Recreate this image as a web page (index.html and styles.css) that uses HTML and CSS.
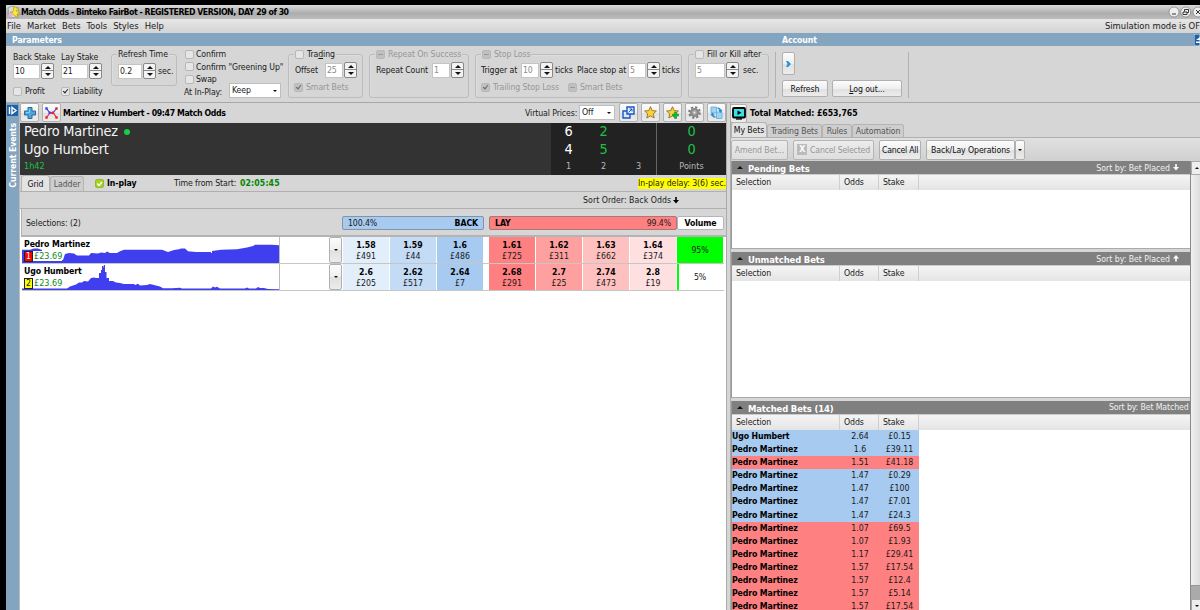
FILE: index.html
```html
<!DOCTYPE html>
<html lang="en">
<head>
<meta charset="utf-8">
<title>Match Odds - Binteko FairBot</title>
<link rel="stylesheet" href="styles.css">
</head>
<body>
<div class="window">
  <div class="titlebar">
    <svg class="logo" width="15" height="14" viewBox="0 0 15 14"><path d="M1 3l4-2 3 2 3-1 1 5-3 5-6 1-1-4z" fill="#d8dde0" stroke="#8b8f8a" stroke-width=".7"/><path d="M7 1l5 4-3 .5 4 4-3-.5 1 4-8-6 3 .2z" fill="#ffe82e" stroke="#a38b12" stroke-width=".6"/><circle cx="3.5" cy="10.5" r="2" fill="#eda6e6"/></svg>
    <b class="window-title">Match Odds - Binteko FairBot - REGISTERED VERSION, DAY 29 of 30</b>
    <div class="window-buttons">
      <svg width="34" height="12" viewBox="0 0 34 12"><g fill="#eee" stroke="#888" stroke-width=".8"><circle cx="6" cy="6" r="5"/><circle cx="17.7" cy="6" r="5"/><circle cx="30" cy="6" r="5"/></g><g fill="none" stroke="#333" stroke-width="1"><path d="M4 8h4M16.5 5.500V3.500h4v3h-1.500M15 6h4v2.500h-4zM28 4l4 4M32 4l-4 4"/></g></svg>
    </div>
  </div>
  <div class="menubar"><span>File</span><span>Market</span><span>Bets</span><span>Tools</span><span>Styles</span><span>Help</span><span class="simulation">Simulation mode is OF</span></div>
  <div class="section-bar"><b class="params-title">Parameters</b><b class="account-title">Account</b>
    <svg class="pin" width="6" height="12" viewBox="0 0 6 12"><path d="M0 0h6v12H0z" fill="#1f5fa6" stroke="#dde6f0"/><path d="M2 6l4-3v3zM2 7.500h4v1.500H2z" fill="#fff"/></svg>
  </div>

  <div class="params">
    <div class="stakes">
      <div class="stake"><span>Back Stake</span><div class="spin"><i class="field">10</i><i class="arrows"></i></div><label class="chk-line"><i class="chk"></i>Profit</label></div>
      <div class="stake"><span>Lay Stake</span><div class="spin"><i class="field">21</i><i class="arrows"></i></div><label class="chk-line"><i class="chk on"></i>Liability</label></div>
    </div>
    <div class="group refresh-time"><div class="legend">Refresh Time</div><div class="row"><div class="spin"><i class="field">0.2</i><i class="arrows"></i></div><span>sec.</span></div></div>
    <div class="confirms">
      <label class="chk-line"><i class="chk"></i>Confirm</label>
      <label class="chk-line"><i class="chk"></i><span>Confirm "Greening Up"</span></label>
      <label class="chk-line"><i class="chk"></i>Swap</label>
      <div class="inplay"><span>At In-Play:</span><div class="select">Keep</div></div>
    </div>
    <div class="group trading"><div class="legend"><i class="chk"></i><span>Tra<u>d</u>ing</span></div><div class="row"><span class="offset">Offset</span><div class="spin off"><i class="field">25</i><i class="arrows"></i></div></div><div class="row checks dim"><i class="chk on"></i>Smart Bets</div></div>
    <div class="group repeat"><div class="legend dim"><i class="chk part"></i>Repeat On Success</div><div class="row"><span class="count">Repeat Count</span><div class="spin off"><i class="field">1</i><i class="arrows"></i></div></div></div>
    <div class="group stop"><div class="legend dim"><i class="chk part"></i>Stop Loss</div>
      <div class="row"><span class="trigger">Trigger at</span><div class="spin off"><i class="field">10</i><i class="arrows"></i></div><span class="ticks">ticks</span><span class="place">Place stop at</span><div class="spin off"><i class="field">5</i><i class="arrows"></i></div><span>ticks</span></div>
      <div class="row checks dim"><i class="chk on"></i><span class="trailing">Trailing Stop Loss</span><i class="chk part"></i>Smart Bets</div></div>
    <div class="group fill"><div class="legend"><i class="chk"></i>Fill or Kill after</div><div class="row"><div class="spin off"><i class="field">5</i><i class="arrows"></i></div><span class="secs">sec.</span></div></div>
    <div class="account">
      <div class="btn expand"><svg width="5" height="6" viewBox="0 0 5 6"><path d="M0 0h2l3 3-3 3H0l1.500-3z" fill="#2692dc"/></svg></div>
      <div class="account-buttons"><div class="btn refresh">Refresh</div><div class="btn logout"><span><u>L</u>og out...</span></div></div>
    </div>
  </div>

  <div class="main">
    <div class="sidebar">
      <svg width="11" height="11" viewBox="0 0 11 11"><path d="M0 0h11v11H0z" fill="#1e62ab"/><path d="M2.500 2v7M5 2.500v6l4-3z" fill="none" stroke="#fff" stroke-width="1.400"/></svg>
      <b class="vertical">Current Events</b>
    </div>

    <div class="market">
      <div class="toolbar">
        <div class="btn tool"><svg width="12" height="12" viewBox="0 0 12 12"><path d="M4 .5h4V4h3.500v4H8v3.500H4V8H.5V4H4z" fill="#4ba6dc" stroke="#2a6c9c"/><path d="M5.500 2v3.500H2" fill="none" stroke="#8bd0f5"/></svg></div>
        <div class="btn tool"><svg width="13" height="12" viewBox="0 0 13 12"><path d="M1.500 1.500L4.500 5.500 7.500 6.500 11.500 1.500" fill="none" stroke="#3a40ee" stroke-width="1.200"/><path d="M1.500 10.500L5 6l3-.5L11.500 10.500" fill="none" stroke="#f2212b" stroke-width="1.200"/><g fill="#3a40ee"><path d="M.3.300h2.400v2.400H.3zM3.500 4.500h2.200v2.200H3.500z"/></g><g fill="#f2212b"><path d="M.3 9.300h2.400v2.400H.3zM10.300 9.300h2.400v2.400h-2.400zM10.300.3h2.400v2.400h-2.400zM7 4.500h2.200v2.200H7z"/></g></svg></div>
        <b class="market-name">Martinez v Humbert - 09:47 Match Odds</b>
        <span class="virtual">Virtual Prices:</span><div class="select off-select">Off</div>
        <div class="tools">
          <div class="btn tool"><svg width="13" height="13" viewBox="0 0 13 13"><path d="M1 5h7v7H1z" fill="#dce9fb" stroke="#1855c4" stroke-width="1.400"/><path d="M5 1h7v7H5z" fill="#eef4fd" stroke="#1855c4" stroke-width="1.400"/><path d="M6.500 6.500L10 3M7.500 3H10v2.500" fill="none" stroke="#1855c4"/></svg></div>
          <div class="btn tool"><svg width="13" height="13" viewBox="0 0 13 13"><path d="M6.500 .7l1.700 3.900 4.200.4-3.100 2.800.9 4.200-3.700-2.200L2.800 12l.9-4.200L.6 5l4.200-.4z" fill="#ffd233" stroke="#8b6f2c" stroke-width=".9"/></svg></div>
          <div class="btn tool"><svg width="13" height="13" viewBox="0 0 13 13"><path d="M6.500 .7l1.700 3.900 4.200.4-3.100 2.800.9 4.200-3.700-2.200L2.800 12l.9-4.200L.6 5l4.200-.4z" fill="#ffd233" stroke="#8b6f2c" stroke-width=".9"/><path d="M8.500 6h2v2h2v2h-2v2.500h-2V10h-2V8h2z" fill="#12bc2c" stroke="#168226" stroke-width=".5"/></svg></div>
          <div class="btn tool"><svg width="13" height="13" viewBox="0 0 13 13"><circle cx="6.500" cy="6.500" r="5.300" fill="none" stroke="#777" stroke-width="2" stroke-dasharray="2.160 2"/><circle cx="6.500" cy="6.500" r="3.400" fill="#ccc" stroke="#888" stroke-width="2.400"/><circle cx="6.500" cy="6.500" r="1.400" fill="#eee" stroke="#777" stroke-width=".6"/></svg></div>
          <div class="btn tool"><svg width="13" height="13" viewBox="0 0 13 13"><g fill="#9fd2f3" stroke="#58ade0" stroke-width=".8"><path d="M1 1h5.500v6H1z"/><path d="M6.500 6H12v6.500H6.500z"/></g><path d="M7.500 2.200c2.300 0 3 .8 3 2.800M9 4l1.500 1.800L12 4M5.500 11c-2.200 0-3-.8-3-2.800M1 9.300l1.500-1.800L4 9.300" fill="none" stroke="#2f8fd0" stroke-width="1.400"/></svg></div>
        </div>
      </div>

      <div class="score">
        <div class="players"><span>Pedro Martinez<i class="serve"></i></span><span>Ugo Humbert</span><small>1h42</small></div>
        <div class="sets">
          <b>6</b><em>2</em><em></em>
          <b>4</b><em>5</em><em></em>
          <small>1</small><small>2</small><small>3</small>
        </div>
        <div class="points"><em>0</em><em>0</em><small>Points</small></div>
      </div>

      <div class="grid-tabs">
        <span class="tab active">Grid</span><span class="tab">Ladder</span>
        <svg class="ok" width="9" height="9" viewBox="0 0 9 9"><rect x=".4" y=".4" width="8.200" height="8.200" rx="2" fill="#a3d41c" stroke="#88a818" stroke-width=".8"/><path d="M2.200 4.500l1.800 2 3-3.500" fill="none" stroke="#fff" stroke-width="1.300"/></svg>
        <b class="in-play">In-play</b><span class="from-start">Time from Start:</span><b class="clock">02:05:45</b>
        <span class="delay">In-play delay: 3(6) sec.</span>
      </div>
      <div class="sort-order"><span>Sort Order: Back Odds</span><svg width="6" height="7" viewBox="0 0 6 7"><path d="M2.200 0h1.600v3H6L3 6.500 0 3h2.200z"/></svg></div>
      <div class="grid-head"><span class="selections">Selections: (2)</span><div class="back-head"><span>100.4%</span><b>BACK</b></div><div class="lay-head"><b>LAY</b><span>99.4%</span></div><b class="volume-head">Volume</b></div>

      <div class="runner">
        <div class="graph">
          <svg width="257" height="27" viewBox="0 0 257 27"><path d="M0 27V12.700H8L12 11.500H16L20 13V23H41L43 17 47 16 52 16.500 55 18.500H67L69 16 76 16.500 79 15.500 83 16 85 14.500 88 16 95 16 98 14.300 102 12.700H140L146 15 152 13 157 12.300 159 11.500H163L166 14.200 174 15H189V16H190V14L199 12.700 215 12.300 225 10.500 231 9 233 7.700H250L257 8.300V27z" fill="#403ff0"/></svg>
          <div class="runner-info"><b>Pedro Martinez</b><span class="profit-line"><i class="num red">1</i><em>£23.69</em></span></div>
        </div>
        <div class="btn drop"></div>
        <div class="cell b3"><b>1.58</b>£491</div><div class="cell b2"><b>1.59</b>£44</div><div class="cell b1"><b>1.6</b>£486</div>
        <div class="cell l1"><b>1.61</b>£725</div><div class="cell l2"><b>1.62</b>£311</div><div class="cell l3"><b>1.63</b>£662</div><div class="cell l4"><b>1.64</b>£374</div>
        <div class="volume full">95%</div>
      </div>
      <div class="runner">
        <div class="graph">
          <svg width="257" height="27" viewBox="0 0 257 27"><path d="M0 27V24.500H45L48 22.500 54 20.500 57 18.500H60L62 17 66 17.500 69 14 72 13.500 74 14H77V9H79V6H80V2H81V4L82 1H83V8H84.500V14H87V17H91L94 18.500 98 19 102 20H112L113 21 116 19.800 118 21.500 125 21 128 20 132 21 138 22.500 141 24.300H150L158 23.800 160 24.500H189L191 22.500 193 23.500 195 22.800 198 24.500H223L225 23.500 227 24.500H234L236 23 238 24H242L246 25 257 25.300V27z" fill="#403ff0"/></svg>
          <div class="runner-info"><b>Ugo Humbert</b><span class="profit-line"><i class="num yellow">2</i><em>£23.69</em></span></div>
        </div>
        <div class="btn drop"></div>
        <div class="cell b3"><b>2.6</b>£205</div><div class="cell b2"><b>2.62</b>£517</div><div class="cell b1"><b>2.64</b>£7</div>
        <div class="cell l1"><b>2.68</b>£291</div><div class="cell l2"><b>2.7</b>£25</div><div class="cell l3"><b>2.74</b>£473</div><div class="cell l4"><b>2.8</b>£19</div>
        <div class="volume small">5%</div>
      </div>
    </div>

    <div class="bets">
      <div class="matched-total"><div class="btn video"><svg width="14" height="13" viewBox="0 0 14 13"><rect x="1" y="1" width="12" height="9.500" rx="1" fill="#39e3e3" stroke="#000" stroke-width="1.800"/><path d="M4 12h6" stroke="#000" stroke-width="1.300"/><path d="M5.500 3.500v4.500l4-2.200z"/></svg></div><b>Total Matched: £653,765</b></div>
      <div class="bet-tabs"><span class="tab active">My Bets</span><span class="tab">Trading Bets</span><span class="tab">Rules</span><span class="tab">Automation</span></div>
      <div class="bet-tools"><div class="btn dim amend">Amend Bet...</div><div class="btn dim cancel-sel"><i class="x-icon">X</i><span>Cancel Selected</span></div><div class="btn cancel-all">Cancel All</div><div class="btn ops">Back/Lay Operations</div><div class="btn more"></div></div>
      <div class="lists">
        <div class="list-column">
          <div class="list pending">
            <div class="list-title"><b>Pending Bets</b><span>Sort by: Bet Placed</span><svg width="6" height="7" viewBox="0 0 6 7"><path d="M2.200 0h1.600v3H6L3 6.500 0 3h2.200z"/></svg></div>
            <div class="columns"><span>Selection</span><span>Odds</span><span>Stake</span></div>
          </div>
          <div class="list unmatched">
            <div class="list-title"><b>Unmatched Bets</b><span>Sort by: Bet Placed</span><svg width="6" height="7" viewBox="0 0 6 7"><path d="M2.200 6.500h1.600v-3H6L3 0 0 3.500h2.200z"/></svg></div>
            <div class="columns"><span>Selection</span><span>Odds</span><span>Stake</span></div>
          </div>
          <div class="list matched">
            <div class="list-title"><b>Matched Bets (14)</b><span>Sort by: Bet Matched</span></div>
            <div class="columns"><span>Selection</span><span>Odds</span><span>Stake</span></div>
            <div class="bet back"><b>Ugo Humbert</b><span>2.64</span><span>£0.15</span></div>
            <div class="bet back"><b>Pedro Martinez</b><span>1.6</span><span>£39.11</span></div>
            <div class="bet lay"><b>Pedro Martinez</b><span>1.51</span><span>£41.18</span></div>
            <div class="bet back"><b>Pedro Martinez</b><span>1.47</span><span>£0.29</span></div>
            <div class="bet back"><b>Pedro Martinez</b><span>1.47</span><span>£100</span></div>
            <div class="bet back"><b>Pedro Martinez</b><span>1.47</span><span>£7.01</span></div>
            <div class="bet back"><b>Pedro Martinez</b><span>1.47</span><span>£24.3</span></div>
            <div class="bet lay"><b>Pedro Martinez</b><span>1.07</span><span>£69.5</span></div>
            <div class="bet lay"><b>Pedro Martinez</b><span>1.07</span><span>£1.93</span></div>
            <div class="bet lay"><b>Pedro Martinez</b><span>1.17</span><span>£29.41</span></div>
            <div class="bet lay"><b>Pedro Martinez</b><span>1.57</span><span>£17.54</span></div>
            <div class="bet lay"><b>Pedro Martinez</b><span>1.57</span><span>£12.4</span></div>
            <div class="bet lay"><b>Pedro Martinez</b><span>1.57</span><span>£5.14</span></div>
            <div class="bet lay"><b>Pedro Martinez</b><span>1.57</span><span>£17.54</span></div>
          </div>
        </div>
        <div class="scrollbar"><div class="scroll-up"></div><div class="thumb"></div><div class="track"></div><div class="scroll-down"></div></div>
      </div>
    </div>
  </div>
</div>
</body>
</html>
```
FILE: styles.css
```css
* { box-sizing: border-box; }
body { margin: 0; background: #000; height: 610px; overflow: hidden; padding: 5px 0 0 6px; font: 8.7px/12px "DejaVu Sans Condensed", "DejaVu Sans", sans-serif; color: #1a1a1a; white-space: nowrap; letter-spacing: -0.1px; }
i, em { font-style: normal; }
b { color: #000; }
svg { flex: none; display: block; }
u { text-underline-offset: 1px; }
.window { width: 1194px; height: 605px; background: #d6d6d6; overflow: hidden; }

.titlebar { height: 14px; display: flex; align-items: center; background: linear-gradient(#dadada, #adadad 60%, #bcbcbc); }
.logo { margin-left: 1px; margin-right: -1px; }
.window-title { line-height: 13px; letter-spacing: -0.45px; }
.window-buttons { margin-left: auto; width: 32px; overflow: hidden; }
.menubar { height: 14px; display: flex; align-items: center; gap: 6px; padding-left: 1px; background: linear-gradient(#e6e6e6, #d4d4d4); font-size: 9.4px; line-height: 14px; letter-spacing: -0.01px; }
.simulation { margin-left: auto; letter-spacing: 0; }
.section-bar { height: 13px; display: flex; align-items: center; background: #84a5c0; }
.section-bar b { color: #fff; }
.params-title { width: 770px; padding-left: 6px; }
.account-title { padding-left: 6px; }
.pin { margin-left: auto; }

.params { height: 57px; display: flex; align-items: flex-start; padding-left: 7px; border-bottom: 1px solid #a8a8a8; }
.stakes { display: flex; width: 98px; padding-top: 5px; }
.stake { width: 48px; }
.stake > span { display: block; height: 12px; }
.spin { display: flex; gap: 1px; height: 16px; align-items: center; flex: none; }
.field { width: 27px; height: 15px; background: #fff; border: 1px solid #c4c4c4; padding-left: 1px; line-height: 12px; }
.off .field { color: #8a8a8a; width: 18px; }
.arrows { position: relative; width: 13px; height: 16px; border: 1px solid #888; border-radius: 2px; background: linear-gradient(#f3f3f3 0 45%, #888 45% 52%, #f3f3f3 52%); }
.arrows::before, .arrows::after { content: ""; position: absolute; left: 2.5px; border: 3px solid transparent; }
.arrows::before { top: -1px; border-bottom-color: #111; }
.arrows::after { bottom: -1px; border-top-color: #111; }
.chk { flex: none; width: 9px; height: 9px; background: #e6e6e6; border: 1px solid #b8b8b8; border-radius: 2px; position: relative; }
.chk.on::after { content: ""; position: absolute; left: 2px; top: 0; width: 2px; height: 4px; border: solid #222; border-width: 0 1.3px 1.3px 0; transform: rotate(40deg); }
.chk.part, .dim .chk { background: #c0c0c0; }
.dim .chk.on::after { border-color: #666; }
.chk.part::after { content: ""; position: absolute; left: 1px; top: 3px; width: 5px; height: 1px; background: #999; }
.chk-line { display: flex; align-items: center; gap: 3px; height: 12px; }
.stake .chk-line { margin-top: 6px; }
.dim { color: #969696; }

.group { position: relative; height: 44px; margin-top: 8px; border: 1px solid #bcbcbc; border-radius: 3px; flex: none; box-shadow: inset 1px 1px #ddd; }
.legend { display: flex; align-items: center; gap: 3px; width: max-content; height: 12px; margin: -7px 0 0 5px; padding: 0 1px; background: #d6d6d6; }
.row { display: flex; align-items: center; height: 16px; margin: 2px 0 0 6px; }
.row.checks { height: 12px; gap: 3px; margin-top: 3px; }
.trading .checks { margin-left: 5px; }
.refresh-time { width: 66px; height: 32px; }
.refresh-time .row { margin-top: 3px; }
.refresh-time .field { width: 24px; }
.refresh-time .row > span { padding-left: 2px; }
.confirms { width: 111px; padding: 2px 0 0 8px; flex: none; }
.confirms .chk-line { height: 12.5px; gap: 2px; }
.inplay { display: flex; align-items: center; height: 12px; }
.inplay > span { width: 45px; margin-left: -1px; }
.select { position: relative; flex: none; width: 52px; height: 15px; background: #fff; border: 1px solid #bdbdbd; padding-left: 2px; line-height: 13px; }
.inplay .select { margin-top: -3px; }
.select::after { content: ""; position: absolute; right: 3px; top: 6px; border: 2.5px solid transparent; border-top-color: #111; border-bottom: 0; }
.trading { width: 75px; }
.offset { width: 30px; }
.repeat { width: 100px; margin-left: 6px; }
.count { width: 56px; }
.stop { width: 207px; margin-left: 6px; }
.stop .row { margin-left: 5px; }
.trigger { width: 40px; }
.ticks { padding-left: 2px; width: 24px; }
.place { width: 51px; }
.stop .spin + span:last-child { padding-left: 2px; }
.stop .checks .trailing { width: 70px; margin-right: 2px; }
.fill { width: 81px; margin-left: 6px; }
.fill .off .field { width: 30px; }
.secs { padding-left: 4px; }
.account { height: 46px; margin: 6px 0 0 6px; padding: 0 6px 0 6px; border: solid #b2b2b2; border-width: 0 1px; }
.btn { flex: none; display: flex; align-items: center; justify-content: center; border: 1px solid #b0b0b0; border-radius: 2px; background: linear-gradient(#fcfcfc, #efefef 50%, #e0e0e0 52%, #ececec); color: #111; }
.btn.dim { color: #969696; border-color: #b5b5b5; background: linear-gradient(#ececec, #dedede); }
.expand { width: 13px; height: 23px; }
.account-buttons { display: flex; gap: 4px; margin-top: 5px; }
.refresh { width: 46px; height: 17px; }
.logout { width: 70px; height: 17px; }

.main { display: flex; height: 507px; }
.sidebar { flex: none; width: 14px; background: #84a5c0; padding-top: 2px; border-right: 1px solid #bbb; display: flex; flex-direction: column; align-items: center; gap: 7px; }
.vertical { writing-mode: vertical-rl; transform: rotate(180deg); color: #fff; font-size: 8.7px; line-height: 12px; }
.market { flex: none; width: 707px; background: #fff; border-right: 1px solid #aaa; }
.toolbar { height: 20px; display: flex; align-items: center; background: #d6d6d6; padding: 0 0 1px 0; }
.tool { width: 19px; height: 19px; margin-right: 3px; }
.market-name { flex: none; width: 462px; letter-spacing: -0.38px; margin-left: -1px; }
.virtual { width: 54px; flex: none; }
.off-select { width: 36px; }
.tools { display: flex; margin-left: 4px; }

.score { height: 52px; display: flex; background: #333; font-size: 14.4px; line-height: 17.5px; color: #f3f3f3; letter-spacing: -0.2px; }
.players { width: 531px; padding-left: 4px; }
.players > span { display: flex; align-items: center; }
.serve { width: 6px; height: 6px; border-radius: 50%; background: #18cf43; margin-left: 6px; }
.score small { font-size: 9px; line-height: 17px; display: block; color: #b9b9b9; letter-spacing: 0; }
.score .players small { color: #1fc144; }
.sets { width: 106px; background: #222; display: grid; grid-template-columns: 35px 35px 35px; grid-template-rows: 17.5px 17.5px 17px; text-align: center; border-right: 1px solid #666; }
.sets b { font-weight: 400; color: #fff; }
.score em { color: #1fc144; display: block; }
.points { flex: 1; background: #222; text-align: center; }

.grid-tabs { height: 17px; background: #d6d6d6; display: flex; align-items: center; border-bottom: 1px solid #b0b0b0; padding-left: 1px; }
.tab { display: flex; align-items: center; justify-content: center; height: 15px; border: 1px solid #b4b4b4; border-bottom: 0; border-radius: 3px 3px 0 0; background: #cecece; color: #555; align-self: flex-end; }
.tab.active { background: #e3e3e3; color: #111; height: 16px; }
.grid-tabs .tab { width: 34px; }
.grid-tabs .tab.active { width: 29px; }
.ok { margin-left: 11px; }
.in-play { width: 67px; margin-left: 3px; }
.from-start { width: 66px; }
.clock { color: #080; letter-spacing: 0.1px; }
.delay { background: #ff0; margin-left: auto; height: 11px; line-height: 11px; width: 88px; letter-spacing: -0.05px; }
.sort-order { height: 17px; background: #d6d6d6; display: flex; align-items: center; gap: 2px; justify-content: flex-end; padding-right: 47px; border-bottom: 1px solid #b0b0b0; letter-spacing: 0.03px; }
.grid-head { height: 28px; background: #d6d6d6; display: flex; align-items: center; border-bottom: 2px solid #b4b4b4; border-left: 1px solid #b4b4b4; padding: 1px 0 0 4px; margin-left: 1px; }
.selections { width: 316px; }
.back-head, .lay-head { display: flex; justify-content: space-between; height: 14px; line-height: 12px; border: 1px solid #8195a9; border-radius: 2px; padding: 0 5px; }
.back-head { width: 142px; background: #a6caf0; margin-right: 5px; }
.lay-head { width: 188px; background: #ff8080; border-color: #a87777; }
.volume-head { width: 47px; height: 14px; line-height: 12px; text-align: center; background: #fff; border: 1px solid #b5b5b5; border-radius: 2px; }
.runner { height: 27px; width: 702px; margin-left: 2px; display: grid; grid-template-columns: 307px 14px 47px 47px 52px 47px 47px 47px 47px 46px; border-bottom: 1px solid #c6c6c6; }
.graph { display: grid; width: 258px; height: 26px; border-right: 1px solid #bbb; overflow: hidden; }
.graph svg, .runner-info { grid-area: 1 / 1; }
.runner-info { padding-left: 2px; line-height: 11px; padding-top: 2px; }
.runner-info b { display: block; }
.profit-line { display: flex; align-items: center; width: 38px; height: 10px; background: #fff; margin-top: 1px; }
.num { width: 9px; height: 11px; border: 1px solid #222; line-height: 9px; text-align: center; flex: none; }
.red { background: #f00; color: #fff; }
.yellow { background: #ff0; }
.profit-line em { color: #14871a; padding-left: 1px; letter-spacing: 0; font-size: 9px; }
.drop { width: 13px; height: 26px; }
.drop::after, .more::after { content: ""; border: 2.5px solid transparent; border-top-color: #111; border-bottom: 0; }
.more::after { border-width: 2px 2px 0; }
.cell { width: 46px; padding-top: 3px; text-align: center; line-height: 11px; height: 26px; letter-spacing: 0.05px; }
.cell b { display: block; }
.b3 { background: #e2eefa; }
.b2 { background: #c4dbf5; }
.b1 { background: #a6caf0; }
.l1 { background: #ff8080; }
.l2 { background: #ffa0a0; }
.l3 { background: #ffc0c0; }
.l4 { background: #ffe0e0; }
.volume { height: 26px; line-height: 27px; text-align: center; }
.full { background: #0f0; }
.small { border-left: 2px solid #0f0; padding-right: 2px; }

.bets { flex: none; width: 473px; padding-left: 4px; background: linear-gradient(90deg, #d6d6d6 3px, #aaa 3px 4px, #d6d6d6 4px); }
.matched-total { height: 20px; display: flex; align-items: center; gap: 3px; letter-spacing: -0.05px; }
.video { width: 17px; height: 19px; margin-left: -1px; }
.bet-tabs { display: flex; height: 15px; border-bottom: 1px solid #b0b0b0; }
.bet-tabs .tab { height: 13px; width: 55px; }
.bet-tabs .tab:nth-child(1) { width: 36px; height: 15px; }
.bet-tabs .tab:nth-child(3) { width: 30px; }
.bet-tabs .tab:nth-child(4) { width: 52px; }
.bet-tools { height: 23px; display: flex; align-items: center; background: linear-gradient(#e0e0e0, #d0d0d0); }
.bet-tools .btn { height: 20px; }
.amend { width: 57px; margin-right: 5px; }
.bet-tools .cancel-sel { width: 81px; margin-right: 5px; gap: 3px; letter-spacing: -0.2px; }
.x-icon { width: 10px; height: 11px; background: #bbb; color: #fff; font-weight: 700; line-height: 11px; text-align: center; }
.cancel-all { width: 42px; margin-right: 5px; letter-spacing: -0.25px; }
.ops { width: 89px; }
.bet-tools .more { width: 10px; }
.lists { display: flex; }
.list-column { flex: none; width: 460px; border-right: 1px solid #888; }
.list { background: #fff; overflow: hidden; border-left: 1px solid #999; }
.pending { height: 88px; border-bottom: 1px solid #aaa; margin-bottom: 3px; }
.unmatched { height: 146px; border-bottom: 1px solid #aaa; margin-bottom: 3px; }
.matched { height: 210px; }
.list-title { height: 13px; background: #808080; color: #f0f0f0; display: flex; align-items: center; gap: 3px; padding-right: 11px; }
.list-title::before { content: ""; border: 3px solid transparent; border-bottom-color: #111; border-top: 0; margin-left: 5px; }
.list-title b { color: #fff; font-size: 9.4px; margin: 2px auto 0 2px; letter-spacing: -0.12px; }
.list-title svg { fill: #fff; }
.list-title span { letter-spacing: -0.02px; }
.matched .list-title { padding-right: 0; }
.matched .list-title span { width: 81px; letter-spacing: -0.12px; margin-top: -1px; }
.columns { height: 16px; background: linear-gradient(#f5f5f5, #e4e4e4); border-top: 1px solid #ccc; display: grid; grid-template-columns: 108px 39px 40px; }
.columns span { border-right: 1px solid #cfcfcf; padding-left: 4px; line-height: 14px; }
.bet { display: grid; grid-template-columns: 108px 40px 39px; width: 187px; height: 13.1px; line-height: 13px; text-align: center; letter-spacing: 0; }
.bet b { text-align: left; letter-spacing: -0.12px; }
.back { background: #a6caf0; }
.lay { background: #ff8080; }
.scrollbar { flex: none; width: 9px; height: 449px; background: #e7e7e7; overflow: hidden; }
.scroll-up, .scroll-down { height: 14px; width: 12px; border: 1px solid #aaa; background: #eee; display: flex; align-items: center; justify-content: center; }
.scroll-up::after, .scroll-down::after { content: ""; border: 2.5px solid transparent; border-bottom-color: #111; border-top: 0; }
.scroll-down::after { transform: rotate(180deg); }
.thumb { height: 411px; background: linear-gradient(90deg, #f1f1f1, #dcdcdc); border-bottom: 1px solid #999; }
.track { height: 13px; background: #aaa; }
```
